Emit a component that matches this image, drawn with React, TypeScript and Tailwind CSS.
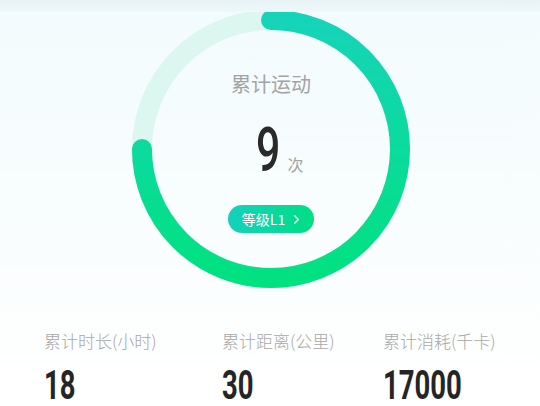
import { ChevronRight } from "lucide-react"

const stats = [
  { label: "累计时长(小时)", value: "18", width: "w-[178px]" },
  { label: "累计距离(公里)", value: "30", width: "w-[161px]" },
  { label: "累计消耗(千卡)", value: "17000", width: "w-[120px]" },
]

function Ring() {
  return (
    <svg className="absolute inset-0" width="280" height="280" viewBox="0 0 280 280">
      <defs>
        <linearGradient id="ringGrad" x1="0" y1="0" x2="0" y2="280" gradientUnits="userSpaceOnUse">
          <stop offset="0" stopColor="#16d3bb" />
          <stop offset="1" stopColor="#00e27e" />
        </linearGradient>
      </defs>
      <circle cx="140" cy="140" r="129" fill="none" stroke="#dcf7ef" strokeWidth="20" />
      <path
        d="M140 11 A129 129 0 1 1 11 140"
        fill="none"
        stroke="url(#ringGrad)"
        strokeWidth="20"
        strokeLinecap="round"
      />
    </svg>
  )
}

export default function App() {
  return (
    <div className="relative w-[540px] h-[406px] overflow-hidden bg-gradient-to-b from-[#f2fbfd] to-white font-['Noto_Sans_CJK_SC',sans-serif]">
      {/* 顶部条 */}
      <div className="absolute top-0 left-0 right-0 h-[12px] z-10 bg-gradient-to-b from-[#e7f2f5] to-[#eef8fa]" />

      {/* 圆环 */}
      <div className="relative ml-[131px] mt-[9px] w-[280px] h-[280px]">
        <Ring />
        <div className="relative flex flex-col items-center pt-[64px]">
          <div className="text-[20px] leading-[22px] text-[#a3a3a3]">累计运动</div>
          <div className="flex items-end mt-[24px] ml-[14px]">
            <span className="inline-block w-[25px] text-center text-[62px] leading-[62px] font-medium text-[#2a2a2a] font-['Roboto',sans-serif] scale-x-[0.69]">
              9
            </span>
            <span className="text-[16px] leading-[16px] text-[#a3a3a3] ml-[10px] mb-[9px]">次</span>
          </div>
          <div className="mt-[24px] flex items-center h-[28px] pl-[14px] pr-[10px] rounded-full bg-gradient-to-r from-[#17d0bb] to-[#00df82] text-white">
            <span className="text-[14px] leading-[14px]">等级L1</span>
            <ChevronRight size={15} strokeWidth={2} className="ml-[4px]" />
          </div>
        </div>
      </div>

      {/* 统计 */}
      <div className="flex pl-[44px] mt-[43px]">
        {stats.map((s) => (
          <div key={s.label} className={s.width}>
            <div className="text-[17px] leading-[18px] text-[#a8a8a8] font-light">{s.label}</div>
            <div className="mt-[18px] text-[41px] leading-[34px] font-bold text-[#252525] font-['Roboto',sans-serif] origin-left scale-x-[0.67]">
              {s.value}
            </div>
          </div>
        ))}
      </div>
    </div>
  )
}
